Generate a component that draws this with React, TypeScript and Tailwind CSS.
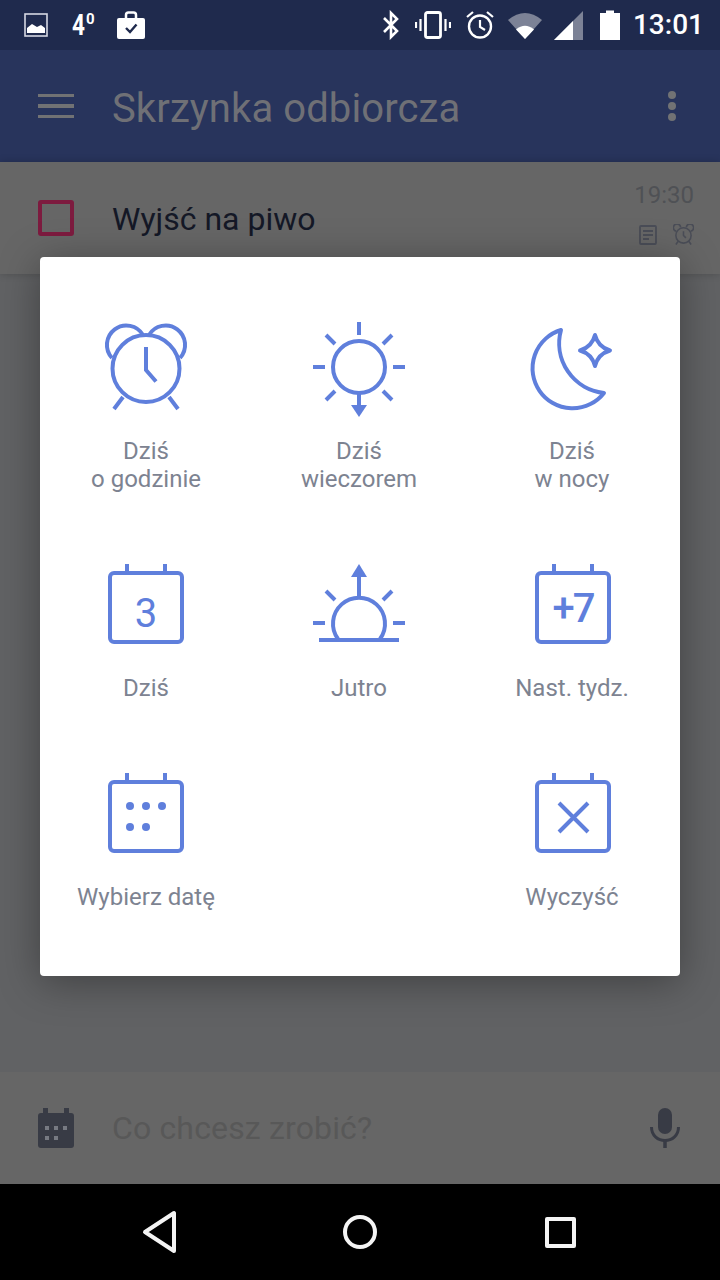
const blue = "#5f7fdc";

function Ic({ x, y, children }: { x: number; y: number; children: React.ReactNode }) {
  return (
    <svg
      viewBox={`${x} ${y} 96 96`}
      className="w-24 h-24 overflow-visible"
      fill="none"
      stroke={blue}
      strokeWidth={4}
    >
      {children}
    </svg>
  );
}

const AlarmIcon = () => (
  <Ic x={98} y={315}>
    <path d="M112 358A19.4 19.4 0 1 1 143 335" />
    <path d="M180 358A19.4 19.4 0 1 0 149 335" />
    <circle cx={146} cy={368.5} r={33.5} />
    <path d="M146 347V370L156 381.5" />
    <path d="M123 397L114 409M169 397L178 409" />
  </Ic>
);

const SunDownIcon = () => (
  <Ic x={311} y={315}>
    <circle cx={359} cy={367} r={26} />
    <path d="M359 322V335M313 367H325M393 367H405M326 335L335 344M392 335L383 344M326 400L335 391M392 400L383 391M359 393V406" />
    <path d="M351 405H367L359 417Z" fill={blue} stroke="none" />
  </Ic>
);

const MoonIcon = () => (
  <Ic x={524} y={315}>
    <path d="M561 330A40 40 0 1 0 604 393A50 50 0 0 1 561 330Z" strokeLinejoin="round" />
    <path
      d="M595 335Q598 347 610 350.5Q598 354 595 366Q592 354 580 350.5Q592 347 595 335Z"
      strokeLinejoin="round"
    />
  </Ic>
);

const SunUpIcon = () => (
  <Ic x={311} y={552}>
    <path d="M319 640H399" />
    <path d="M338 639A26 26 0 1 1 380 639" />
    <path d="M359 598V575M313 623H325M393 623H405M326 591L335 600M392 591L383 600" />
    <path d="M351 577H367L359 564Z" fill={blue} stroke="none" />
  </Ic>
);

function CalIcon({ y, x, children }: { y: number; x: number; children?: React.ReactNode }) {
  const body = y + 21;
  return (
    <Ic x={x} y={y}>
      <rect x={x === 523 ? 536 : x + 12} y={body} width={72} height={69} rx={4} />
      <path d={x === 523 ? `M553 ${body - 9}V${body}M591 ${body - 9}V${body}` : `M${x + 29} ${body - 9}V${body}M${x + 67} ${body - 9}V${body}`} />
      {children}
    </Ic>
  );
}

const items = [
  { icon: <AlarmIcon />, label: ["Dziś", "o godzinie"] },
  { icon: <SunDownIcon />, label: ["Dziś", "wieczorem"] },
  { icon: <MoonIcon />, label: ["Dziś", "w nocy"] },
  {
    icon: (
      <CalIcon x={98} y={552}>
        <text x={146} y={627} textAnchor="middle" fontSize={40} fill={blue} stroke="none" fontFamily="Roboto, sans-serif">
          3
        </text>
      </CalIcon>
    ),
    label: ["Dziś"],
  },
  { icon: <SunUpIcon />, label: ["Jutro"] },
  {
    icon: (
      <CalIcon x={523} y={552}>
        <text x={572} y={622} textAnchor="middle" fontSize={40} letterSpacing={-2} fontWeight={500} fill={blue} stroke="none" fontFamily="Roboto, sans-serif">
          +7
        </text>
      </CalIcon>
    ),
    label: ["Nast. tydz."],
  },
  {
    icon: (
      <CalIcon x={98} y={761}>
        <g fill={blue} stroke="none">
          <circle cx={130} cy={806} r={4} />
          <circle cx={146} cy={806} r={4} />
          <circle cx={162} cy={806} r={4} />
          <circle cx={130} cy={827} r={4} />
          <circle cx={146} cy={827} r={4} />
        </g>
      </CalIcon>
    ),
    label: ["Wybierz datę"],
  },
  { icon: null, label: [] },
  {
    icon: (
      <CalIcon x={523} y={761}>
        <path d="M558 803L587 832M587 803L558 832" />
      </CalIcon>
    ),
    label: ["Wyczyść"],
  },
];

function StatusBar() {
  return (
    <div className="h-[50px] bg-[#1f2a4d] flex items-center text-white shrink-0">
      <svg width="24" height="24" viewBox="0 0 24 24" className="ml-6">
        <rect x="1" y="1" width="22" height="22" fill="none" stroke="#d5d8e3" strokeWidth="1.6" />
        <path d="M3 20V15L8 11L13 14L17 12L21 15V20Z" fill="#fff" />
      </svg>
      <span className="ml-6 text-[30px] leading-none font-bold scale-x-75 origin-left w-[15px]">4</span>
      <span className="text-[15px] leading-none font-bold mb-3 -ml-[1px]">0</span>
      <svg width="30" height="28" viewBox="0 0 30 28" className="ml-[21px] -mt-[1px]">
        <path d="M10 8V4Q10 1.5 12.5 1.5H17.5Q20 1.5 20 4V8" fill="none" stroke="#fff" strokeWidth="2.5" />
        <rect x="1" y="7" width="28" height="21" rx="2" fill="#fff" />
        <path d="M10 17L14 21L20.5 13.5" fill="none" stroke="#1f2a4d" strokeWidth="2.4" />
      </svg>
      <div className="flex-1" />
      <svg width="20" height="30" viewBox="0 0 20 30" className="mr-[14px]">
        <path d="M3 8L16 21L10 27V3L16 9L3 22" fill="none" stroke="#fff" strokeWidth="2.6" />
      </svg>
      <svg width="36" height="28" viewBox="0 0 36 28" className="mr-[14px]">
        <rect x="10.5" y="1.5" width="15" height="25" rx="2" fill="none" stroke="#fff" strokeWidth="2.8" />
        <path d="M5.5 8V20M1 11V17M30.5 8V20M35 11V17" stroke="#fff" strokeWidth="2.2" />
      </svg>
      <svg width="30" height="30" viewBox="0 0 30 30" className="mr-[12px]">
        <circle cx="15" cy="16.5" r="11" fill="none" stroke="#fff" strokeWidth="2.4" />
        <path d="M15 10V17L20 20M2 7L8 2M28 7L22 2" fill="none" stroke="#fff" strokeWidth="2.2" />
      </svg>
      <svg width="36" height="28" viewBox="0 0 36 28" className="mr-[10px]">
        <path d="M1 9Q18 -5 35 9L18 28Z" fill="#7c8296" />
        <path d="M9 18.5Q18 11 27 18.5L18 28Z" fill="#fff" />
      </svg>
      <svg width="30" height="30" viewBox="0 0 30 30" className="mr-[17px]">
        <path d="M30 1V30H1Z" fill="#7c8296" />
        <path d="M20 11V30H1Z" fill="#fff" />
      </svg>
      <svg width="20" height="30" viewBox="0 0 20 30" className="mr-[13px]">
        <path d="M6 3V0.5H14V3H20V30H0V3Z" fill="#fff" />
      </svg>
      <span className="text-[28px] leading-none font-medium mr-[16px]">13:01</span>
    </div>
  );
}

export default function App() {
  return (
    <div className="relative h-[1280px] w-[720px] overflow-hidden flex flex-col bg-[#616264] font-['Roboto',sans-serif]">
      <StatusBar />
      <div className="h-[112px] bg-[#28345c] flex items-center pl-[38px] pr-[44px] shrink-0">
        <div className="w-9 flex flex-col gap-[7px]">
          <div className="h-[3.5px] bg-[#717274]" />
          <div className="h-[3.5px] bg-[#717274]" />
          <div className="h-[3.5px] bg-[#717274]" />
        </div>
        <div className="ml-[38px] mt-[6px] text-[40px] leading-none tracking-[0.1px] text-[#6f7076] flex-1">Skrzynka odbiorcza</div>
        <div className="flex flex-col gap-[3px]">
          <div className="w-2 h-2 rounded-full bg-[#717274]" />
          <div className="w-2 h-2 rounded-full bg-[#717274]" />
          <div className="w-2 h-2 rounded-full bg-[#717274]" />
        </div>
      </div>
      <div className="h-[112px] bg-[#666666] flex items-center pl-[38px] pr-[26px] shrink-0 shadow-[0_0_8px_rgba(0,0,0,0.2)]">
        <div className="w-9 h-9 border-[4px] border-[#7d1b3f] rounded-[3px]" />
        <div className="ml-[38px] mt-[2px] text-[32px] leading-none text-[#141826] flex-1">Wyjść na piwo</div>
        <div className="flex flex-col items-end gap-[17px] mb-[7px]">
          <div className="text-[24px] leading-none text-[#4f5155]">19:30</div>
          <div className="flex gap-[16px] items-center">
            <svg width="18" height="20" viewBox="0 0 18 20" fill="none" stroke="#4a4d57" strokeWidth="1.8">
              <rect x="1" y="1" width="16" height="18" rx="1" />
              <path d="M4 6H14M4 10H14M4 14H10" />
            </svg>
            <svg width="21" height="22" viewBox="0 0 22 22" fill="none" stroke="#4a4d57" strokeWidth="1.6">
              <circle cx="11" cy="11.5" r="8" />
              <path d="M3.5 7A3.8 3.8 0 1 1 8 2.8M18.5 7A3.8 3.8 0 1 0 14 2.8M11 7V11.5L13.5 14M5.5 17.5L3 21M16.5 17.5L19 21" />
            </svg>
          </div>
        </div>
      </div>
      <div className="flex-1" />
      <div className="h-[112px] bg-[#666666] flex items-center pl-[38px] pr-[40px] shrink-0">
        <svg width="36" height="40" viewBox="0 0 36 40">
          <path d="M5 5V0H10V5H26V0H31V5H33Q36 5 36 8V37Q36 40 33 40H3Q0 40 0 37V8Q0 5 3 5Z" fill="#383b45" />
          <g fill="#777a82">
            <rect x="7" y="18" width="4" height="4" />
            <rect x="16" y="18" width="4" height="4" />
            <rect x="25" y="18" width="4" height="4" />
            <rect x="7" y="28" width="4" height="4" />
            <rect x="16" y="28" width="4" height="4" />
          </g>
        </svg>
        <div className="ml-[38px] text-[32px] leading-none tracking-[0.15px] text-[#585858] flex-1">Co chcesz zrobić?</div>
        <svg width="30" height="40" viewBox="0 0 30 40" fill="none">
          <rect x="8" y="0" width="14" height="26" rx="7" fill="#383b45" />
          <path d="M1.5 19C1.5 37 28.5 37 28.5 19" stroke="#383b45" strokeWidth="3" />
          <path d="M15 31V40" stroke="#383b45" strokeWidth="3.5" />
        </svg>
      </div>
      <div className="h-24 bg-black flex justify-center items-center shrink-0">
        <div className="w-[200px] flex justify-center">
          <svg width="36" height="44" viewBox="0 0 36 44" fill="none" stroke="#f4f4f4" strokeWidth="4" strokeLinejoin="round">
            <path d="M32 3V41L3 22Z" />
          </svg>
        </div>
        <div className="w-[200px] flex justify-center">
          <div className="w-[34px] h-[34px] rounded-full border-[4px] border-[#f4f4f4]" />
        </div>
        <div className="w-[200px] flex justify-center">
          <div className="w-[31px] h-[31px] rounded-[2px] border-[4px] border-[#f4f4f4]" />
        </div>
      </div>

      <div className="absolute left-10 top-[257px] w-[640px] h-[719px] bg-white rounded-[4px] shadow-[0_6px_40px_rgba(0,0,0,0.35)] pt-[58px]">
        <div className="grid grid-cols-[212px_214px_212px] gap-y-[59px]">
          {items.map((it, i) => (
            <div key={i} className="flex flex-col items-center">
              {it.icon}
              {it.label.length > 0 && (
                <div className="mt-[26px] text-[24px] leading-[28px] text-[#7d8391] text-center whitespace-nowrap">
                  {it.label.map((l) => (
                    <div key={l}>{l}</div>
                  ))}
                </div>
              )}
            </div>
          ))}
        </div>
      </div>
    </div>
  );
}
